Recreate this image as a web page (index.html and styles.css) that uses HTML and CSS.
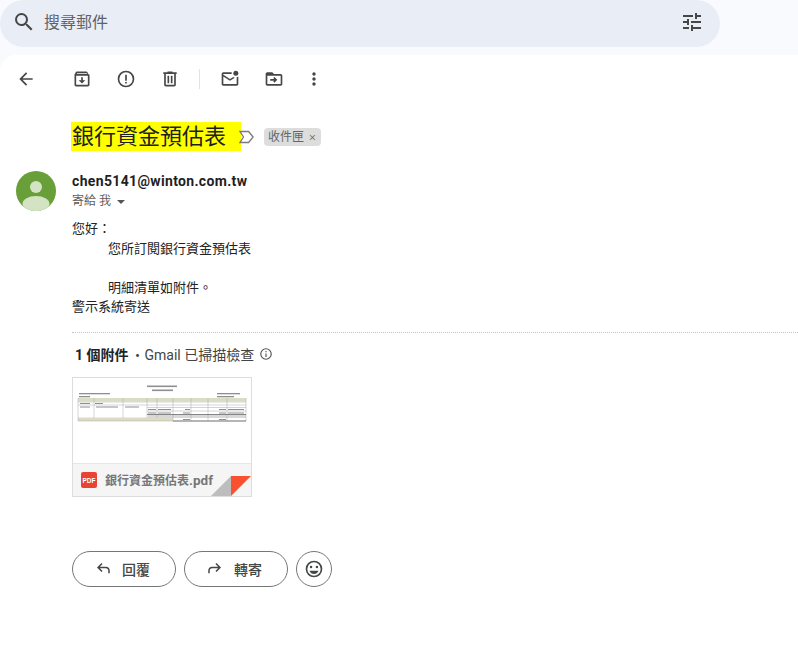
FILE: index.html
```html
<!DOCTYPE html>
<html lang="zh-Hant">
<head>
<meta charset="utf-8">
<title>銀行資金預估表</title>
<link rel="stylesheet" href="styles.css">
</head>
<body>
<header class="top">
  <div class="search">
    <svg class="ico-search" viewBox="0 0 24 24"><path d="M15.5 14h-.79l-.28-.27A6.47 6.47 0 0 0 16 9.5 6.5 6.5 0 1 0 9.5 16c1.61 0 3.09-.59 4.23-1.57l.27.28v.79l5 4.99L20.49 19l-4.99-5zm-6 0C7.01 14 5 11.99 5 9.5S7.01 5 9.5 5 14 7.01 14 9.5 11.99 14 9.5 14z"/></svg>
    <span class="search-text">搜尋郵件</span>
    <svg class="ico-tune" viewBox="0 0 24 24"><path d="M3 17v2h6v-2H3zM3 5v2h10V5H3zm10 16v-2h8v-2h-8v-2h-2v6h2zM7 9v2H3v2h4v2h2V9H7zm14 4v-2H11v2h10zm-6-4h2V7h4V5h-4V3h-2v6z"/></svg>
  </div>
</header>
<main class="panel">
  <nav class="toolbar">
    <svg class="tool tool-back" viewBox="0 0 24 24"><path d="M20 11H7.830l5.590-5.590L12 4l-8 8 8 8 1.410-1.410L7.830 13H20v-2z"/></svg>
    <svg class="tool" viewBox="0 0 24 24"><path d="M20 6.500 18.500 3.800c-.2-.5-.7-.8-1.300-.8H5.800c-.6 0-1.100.3-1.300.8L3 6.500V19c0 1.100.9 2 2 2h14c1.100 0 2-.9 2-2V6.500h-1zM19 19H5V8h14v11zM5.600 6l.6-1h11.600l.6 1H5.600z"/><path d="M12 17.500l4-4h-3V10h-2v3.500H8l4 4z"/></svg>
    <svg class="tool" viewBox="0 0 24 24"><path d="M12 2a10 10 0 1 0 0 20 10 10 0 0 0 0-20zm0 18a8 8 0 1 1 0-16 8 8 0 0 1 0 16z"/><path d="M11 7h2v7h-2zM11 15.500h2v2h-2z"/></svg>
    <svg class="tool" viewBox="0 0 24 24"><path d="M15 4V3H9v1H4v2h1v13c0 1.100.9 2 2 2h10c1.100 0 2-.9 2-2V6h1V4h-5zm2 15H7V6h10v13z"/><path d="M9 8h2v9H9zM13 8h2v9h-2z"/></svg>
    <span class="tool-sep"></span>
    <svg class="tool" viewBox="0 0 24 24"><path d="M22 8.980V18c0 1.100-.9 2-2 2H4c-1.100 0-2-.9-2-2V6c0-1.100.9-2 2-2h10.100c-.06.320-.1.660-.1 1s.04.680.1 1H4v12h16V9.900c.74-.15 1.420-.480 2-.92zM16 9.500 12 12 4 7v2l8 5 5.800-3.630A5 5 0 0 1 16 9.500z"/><circle cx="19" cy="5" r="3"/></svg>
    <svg class="tool tool-move" viewBox="0 0 24 24"><path d="M20 6h-8l-2-2H4c-1.100 0-2 .9-2 2v12c0 1.100.9 2 2 2h16c1.100 0 2-.9 2-2V8c0-1.100-.9-2-2-2zm0 12H4V8h16v10z"/><path d="M12.500 9.500l-1.400 1.400 1.100 1.100H7.500v2h4.700l-1.100 1.100 1.400 1.400 3.500-3.500z"/></svg>
    <svg class="tool tool-more" viewBox="0 0 24 24"><path d="M12 8c1.100 0 2-.9 2-2s-.9-2-2-2-2 .9-2 2 .9 2 2 2zm0 2c-1.100 0-2 .9-2 2s.9 2 2 2 2-.9 2-2-.9-2-2-2zm0 6c-1.100 0-2 .9-2 2s.9 2 2 2 2-.9 2-2-.9-2-2-2z"/></svg>
  </nav>

  <div class="subject-row">
    <h1 class="subject">銀行資金預估表</h1>
    <svg class="label-ico" viewBox="0 0 16 16"><path d="M1 2.500h8.600l4.500 5.500-4.500 5.500H1l3.500-5.500z"/></svg>
    <span class="chip">收件匣<span class="chip-x">×</span></span>
  </div>

  <section class="message">
    <svg class="avatar" viewBox="0 0 40 40">
      <defs><clipPath id="round"><circle cx="20" cy="20" r="20"/></clipPath></defs>
      <circle cx="20" cy="20" r="20" fill="#689f38"/>
      <circle cx="20" cy="16" r="6" fill="#d5e3c5"/>
      <ellipse cx="20" cy="33" rx="13.500" ry="8" fill="#d5e3c5" clip-path="url(#round)"/>
    </svg>
    <div class="msg-main">
      <div class="sender">chen5141@winton.com.tw</div>
      <div class="to">寄給 我<span class="caret"></span></div>
      <div class="body">
        <p>您好：</p>
        <p class="indent">您所訂閱銀行資金預估表</p>
        <p>&nbsp;</p>
        <p class="indent">明細清單如附件。</p>
        <p>警示系統寄送</p>
      </div>
      <div class="att-head">
        <strong class="att-count">1 個附件</strong>
        <span class="att-note">・Gmail 已掃描檢查</span>
        <svg class="info" viewBox="0 0 24 24"><path d="M11 7h2v2h-2zm0 4h2v6h-2zm1-9a10 10 0 1 0 0 20 10 10 0 0 0 0-20zm0 18a8 8 0 1 1 0-16 8 8 0 0 1 0 16z"/></svg>
      </div>
      <div class="card">
        <svg class="thumb" viewBox="0 0 178 85">
          <g class="doc-ink">
            <rect x="74" y="7.500" width="30" height="1.600"/>
            <rect x="79" y="11.500" width="21" height="1.600"/>
            <rect x="6" y="15" width="31" height="1.300"/>
            <rect x="144" y="15" width="23" height="1.300"/>
            <rect x="6" y="18" width="11" height="1.300"/>
            <rect x="144" y="18" width="17" height="1.300"/>
            <rect x="7" y="25" width="10" height="1"/>
            <rect x="22" y="25" width="8" height="1"/>
            <rect x="7" y="28.500" width="10" height="1"/>
            <rect x="23" y="28.500" width="22" height="1"/>
            <rect x="52" y="28.500" width="14" height="1"/>
            <rect x="75" y="31" width="8" height="1"/>
            <rect x="85" y="31" width="13" height="1"/>
            <rect x="112" y="31" width="5" height="1"/>
            <rect x="146" y="31" width="7" height="1"/>
            <rect x="155" y="31" width="16" height="1"/>
            <rect x="75" y="34.500" width="8" height="1"/>
            <rect x="85" y="34.500" width="13" height="1"/>
            <rect x="110" y="34.500" width="7" height="1"/>
            <rect x="146" y="34.500" width="7" height="1"/>
            <rect x="155" y="34.500" width="16" height="1"/>
            <rect x="110" y="41" width="7" height="1"/>
            <rect x="146" y="41" width="7" height="1"/>
          </g>
          <rect class="doc-band" x="5" y="20" width="168" height="3.500"/>
          <rect class="doc-band" x="5" y="39.500" width="95" height="3.500"/>
          <rect class="doc-gray" x="75" y="37" width="98" height="3"/>
          <g class="doc-lines">
            <path d="M5 20v23M21 20v20M50 20v20M74 20v20M84 20v20M100 20v23M118 20v23M135 20v23M154 20v23M173 20v23M5 24h168M5 27h168M74 29.500h99M74 33h99M5 43h168"/>
            <path class="doc-dark" d="M74 36.500h99M100 43h73"/>
          </g>
        </svg>
        <div class="card-foot">
          <svg class="pdf" viewBox="0 0 16 16"><rect width="16" height="16" rx="2" fill="#ea4335"/><text x="8" y="10.500" text-anchor="middle" class="pdf-text">PDF</text></svg>
          <span class="file-name">銀行資金預估表<span class="file-ext">.pdf</span></span>
          <svg class="fold" viewBox="0 0 40 20"><path d="M0 20 20 0v20z" fill="#bdbdbd"/><path d="M20 0h20L20 20z" fill="#f9512f"/></svg>
        </div>
      </div>
      <div class="actions">
        <button class="btn">
          <svg viewBox="0 0 24 24"><path d="M21 17.500h-2V14c0-1.700-1.300-3-3-3H7.800l3.600 3.600-1.400 1.400L4 10l6-6 1.400 1.400L7.800 9H16c2.800 0 5 2.200 5 5v3.500z"/></svg>
          <span>回覆</span>
        </button>
        <button class="btn">
          <svg viewBox="0 0 24 24"><path d="M3 17.500h2V14c0-1.700 1.300-3 3-3h8.200l-3.600 3.600 1.400 1.400 6-6-6-6-1.400 1.400L16.200 9H8c-2.800 0-5 2.200-5 5v3.500z"/></svg>
          <span>轉寄</span>
        </button>
        <button class="btn-round" aria-label="emoji">
          <svg viewBox="0 0 24 24"><path d="M12 2a10 10 0 1 0 0 20 10 10 0 0 0 0-20zm0 18a8 8 0 1 1 0-16 8 8 0 0 1 0 16z"/><circle cx="8.500" cy="9.500" r="1.500"/><circle cx="15.500" cy="9.500" r="1.500"/><path d="M12 18c2.500 0 4.600-1.600 5.500-4h-11c.9 2.400 3 4 5.500 4z"/></svg>
        </button>
      </div>
    </div>
  </section>
</main>
</body>
</html>
```
FILE: styles.css
```css
* { box-sizing: border-box; }
html, body { height: 100%; }
body {
  margin: 0;
  background: #f8fafd;
  font-family: Roboto, "Noto Sans CJK TC", sans-serif;
  color: #222;
  overflow: hidden;
  display: flex;
  flex-direction: column;
}
.top { height: 55px; flex: none; }
.search {
  width: 720px;
  height: 47px;
  background: #e9eef6;
  border-radius: 24px;
  display: flex;
  align-items: center;
  padding: 0 16px 3px 12px;
}
.ico-search { width: 24px; height: 24px; fill: #444746; flex: none; }
.search-text { margin: 1px 0 0 8px; font-size: 16px; line-height: 24px; color: #5f6368; flex: 1; }
.ico-tune { width: 24px; height: 24px; fill: #444746; flex: none; }

.panel {
  flex: 1;
  background: #fff;
  border-radius: 16px 0 0 0;
  min-height: 0;
}
.toolbar {
  height: 48px;
  display: flex;
  align-items: center;
  padding: 0 0 0 16px;
  margin-bottom: 19px;
}
.tool { width: 20px; height: 20px; fill: #444746; flex: none; margin-right: 24px; }
.tool-back { margin-right: 36px; }
.tool-sep { width: 1px; height: 20px; background: #e3e3e3; margin: 0 20px 0 -5px; flex: none; }
.tool-move { margin-right: 20px; }
.tool-more { margin-right: 0; }

.subject-row {
  display: flex;
  align-items: center;
  height: 29px;
  padding-left: 71px;
}
.subject {
  margin: 0;
  background: #ffff00;
  font-weight: 400;
  font-size: 22px;
  line-height: 29px;
  width: 170px;
  padding-left: 1px;
  color: #1f1f1f;
  white-space: nowrap;
}
.label-ico { width: 16px; height: 16px; fill: none; stroke: #7a7a7a; stroke-width: 1.300; margin: 0 9px 0 -2px; flex: none; }
.chip {
  height: 18px;
  width: 57px;
  background: #dddddd;
  border-radius: 4px;
  font-size: 12px;
  line-height: 18px;
  color: #666;
  padding-left: 4px;
  white-space: nowrap;
  display: flex;
}
.chip-x { margin-left: 5px; font-size: 13px; font-weight: 300; }

.message { display: flex; padding: 20px 0 0 16px; }
.avatar { width: 40px; height: 40px; flex: none; margin-right: 16px; }
.msg-main { flex: 1; min-width: 0; }
.sender { font-size: 14px; font-weight: 700; line-height: 20px; color: #1f1f1f; letter-spacing: .34px; }
.to { font-size: 12px; line-height: 20px; color: #5e5e5e; display: flex; align-items: center; }
.caret {
  width: 0; height: 0; margin-left: 6px; margin-top: 1px;
  border: 4px solid transparent;
  border-top: 4px solid #555;
  border-bottom: 0;
}
.body { margin-top: 8px; font-size: 13px; line-height: 19.500px; color: #222; padding-bottom: 15px; border-bottom: 1px dotted #c4c4c4; }
.body p { margin: 0; }
.indent { padding-left: 36px; }

.att-head { display: flex; align-items: center; height: 20px; margin-top: 11px; padding-left: 3px; font-size: 14px; color: #444; white-space: nowrap; }
.att-count { font-weight: 700; color: #222; }
.att-note { margin-left: 2px; }
.info { width: 14px; height: 14px; fill: #555; margin-left: 5px; }

.card {
  width: 180px;
  height: 120px;
  margin-top: 13px;
  border: 1px solid #ddd;
  display: flex;
  flex-direction: column;
  background: #fff;
}
.thumb { width: 178px; height: 85px; display: block; flex: none; filter: blur(.5px); }
.doc-ink rect { fill: #8f8f8f; }
.doc-band { fill: #dcdcc4; }
.doc-gray { fill: #d8d8d8; }
.doc-lines path { fill: none; stroke: #a8a8a8; stroke-width: .5; }
.doc-lines .doc-dark { stroke: #666; stroke-width: .8; }
.card-foot {
  flex: 1;
  background: #f5f5f5;
  border-top: 1px solid #e6e6e6;
  display: flex;
  align-items: center;
  padding-left: 8px;
  position: relative;
}
.pdf { width: 16px; height: 16px; flex: none; }
.pdf-text { font: 700 6.500px "Liberation Sans", sans-serif; fill: #fff; }
.file-name { margin-left: 8px; font-size: 12px; font-weight: 700; color: #777; white-space: nowrap; }
.file-ext { font-size: 13.500px; }
.fold { position: absolute; right: 0; bottom: 0; width: 40px; height: 20px; }

.actions { display: flex; gap: 8px; margin-top: 54px; }
.btn {
  width: 104px;
  height: 36px;
  border: 1px solid #747775;
  border-radius: 18px;
  background: #fff;
  display: flex;
  align-items: center;
  justify-content: center;
  gap: 10px;
  padding: 0 4px 0 0;
  font: 500 14px Roboto, "Noto Sans CJK TC", sans-serif;
  color: #444746;
}
.btn svg { width: 18px; height: 18px; fill: #444746; }
.btn-round {
  width: 36px;
  height: 36px;
  border: 1px solid #747775;
  border-radius: 50%;
  background: #fff;
  padding: 0;
  display: flex;
  align-items: center;
  justify-content: center;
}
.btn-round svg { width: 20px; height: 20px; fill: #444746; }
```
